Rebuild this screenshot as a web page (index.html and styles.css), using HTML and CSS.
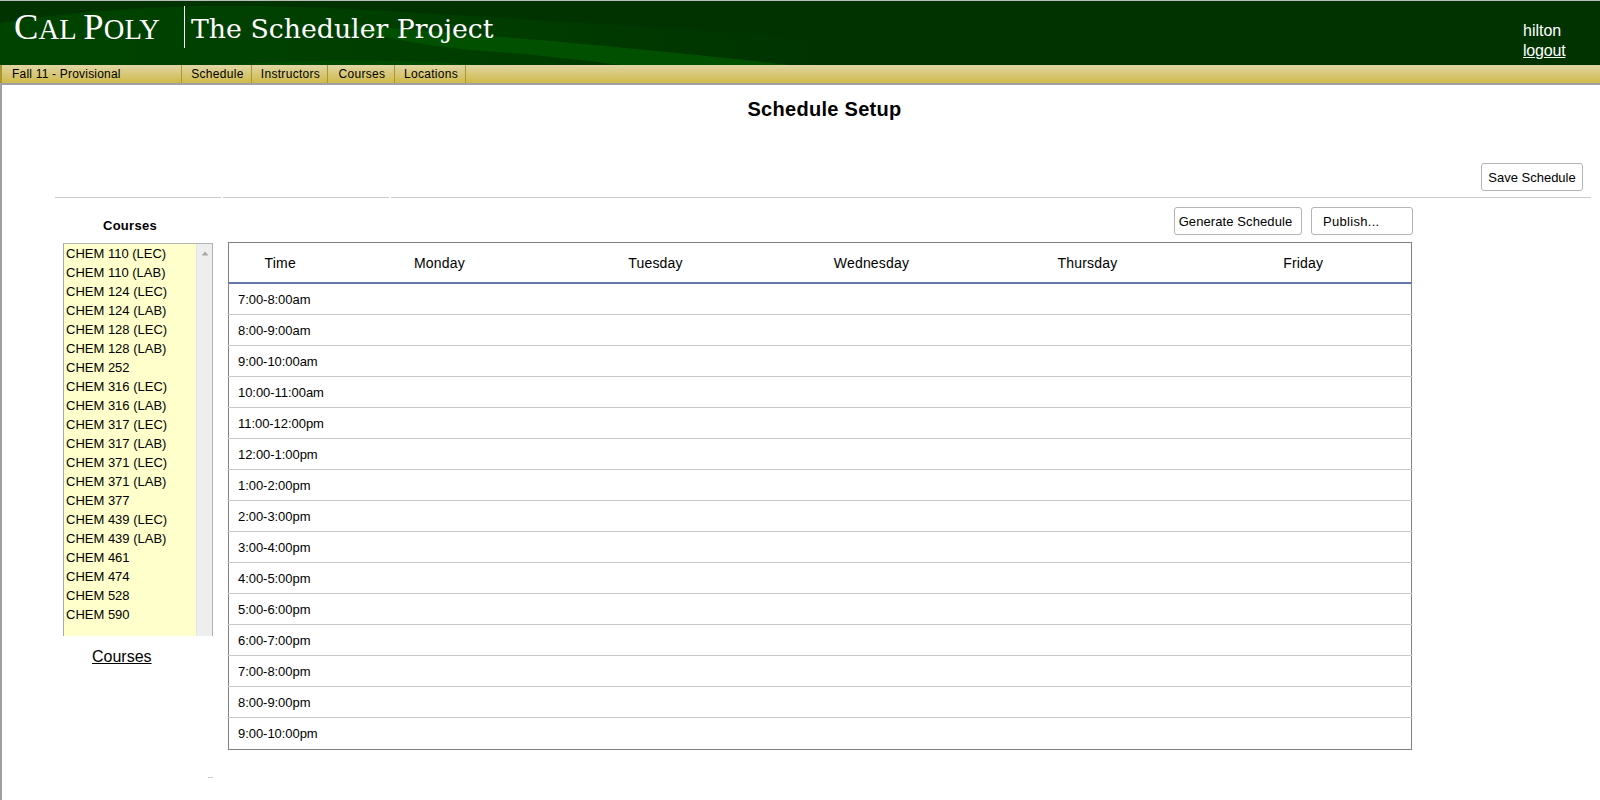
FILE: index.html
```html
<!DOCTYPE html>
<html lang="en">
<head>
<meta charset="utf-8">
<title>The Scheduler Project</title>
<link rel="stylesheet" href="styles.css">
</head>
<body>
<div class="page">
  <header class="masthead">
    <svg class="swoosh" width="1000" height="64" viewBox="0 0 1000 64" aria-hidden="true">
      <defs>
        <linearGradient id="fade" x1="0" y1="0" x2="1" y2="0">
          <stop offset="0" stop-color="#004300"/>
          <stop offset="0.55" stop-color="#003d00"/>
          <stop offset="0.95" stop-color="#003300"/>
        </linearGradient>
      </defs>
      <path d="M0 22C60 12 130 7 200 5C300 3 420 12 520 18C640 26 720 30 830 40L860 64H0Z" fill="url(#fade)"/>
      <path d="M330 22C400 28 480 34 540 39C620 46 710 55 790 64H620C575 58 530 53 470 49C420 44 380 36 330 22Z" fill="#005000"/>
      <path d="M230 64C300 58 400 58 480 64Z" fill="#004a00"/>
    </svg>
    <div class="brand">
      <span class="logo"><span class="logo-cap">C</span>AL <span class="logo-cap">P</span>OLY</span>
      <span class="project">The Scheduler Project</span>
    </div>
    <div class="user">
      <div>hilton</div>
      <a href="#">logout</a>
    </div>
  </header>
  <nav class="nav">
    <span class="nav-term">Fall 11 - Provisional</span>
    <a class="nav-item w-schedule" href="#">Schedule</a>
    <a class="nav-item w-instructors" href="#">Instructors</a>
    <a class="nav-item w-courses" href="#">Courses</a>
    <a class="nav-item w-locations" href="#">Locations</a>
  </nav>
  <main class="main">
    <h1 class="title">Schedule Setup</h1>
    <div class="save-row"><button class="btn btn-save">Save Schedule</button></div>
    <div class="rules"><span class="rule r1"></span><span class="rule r2"></span><span class="rule r3"></span></div>
    <div class="content">
      <aside class="side">
        <h2 class="side-title">Courses</h2>
        <div class="listbox">
          <ul class="course-list">
            <li>CHEM 110 (LEC)</li>
            <li>CHEM 110 (LAB)</li>
            <li>CHEM 124 (LEC)</li>
            <li>CHEM 124 (LAB)</li>
            <li>CHEM 128 (LEC)</li>
            <li>CHEM 128 (LAB)</li>
            <li>CHEM 252</li>
            <li>CHEM 316 (LEC)</li>
            <li>CHEM 316 (LAB)</li>
            <li>CHEM 317 (LEC)</li>
            <li>CHEM 317 (LAB)</li>
            <li>CHEM 371 (LEC)</li>
            <li>CHEM 371 (LAB)</li>
            <li>CHEM 377</li>
            <li>CHEM 439 (LEC)</li>
            <li>CHEM 439 (LAB)</li>
            <li>CHEM 461</li>
            <li>CHEM 474</li>
            <li>CHEM 528</li>
            <li>CHEM 590</li>
          </ul>
          <div class="scrollbar"><svg width="8" height="5" viewBox="0 0 8 5" aria-hidden="true"><path d="M4 0.5L7.5 4.5H0.5Z" fill="#a8a8a8"/></svg></div>
        </div>
        <a class="side-link" href="#">Courses</a>
        <div class="speck"></div>
      </aside>
      <section class="schedule">
        <div class="actions">
          <button class="btn btn-generate">Generate Schedule</button>
          <button class="btn btn-publish">Publish...</button>
        </div>
        <table class="grid">
          <thead>
            <tr><th class="col-time">Time</th><th>Monday</th><th>Tuesday</th><th>Wednesday</th><th>Thursday</th><th>Friday</th></tr>
          </thead>
          <tbody>
            <tr><td>7:00-8:00am</td><td></td><td></td><td></td><td></td><td></td></tr>
            <tr><td>8:00-9:00am</td><td></td><td></td><td></td><td></td><td></td></tr>
            <tr><td>9:00-10:00am</td><td></td><td></td><td></td><td></td><td></td></tr>
            <tr><td>10:00-11:00am</td><td></td><td></td><td></td><td></td><td></td></tr>
            <tr><td>11:00-12:00pm</td><td></td><td></td><td></td><td></td><td></td></tr>
            <tr><td>12:00-1:00pm</td><td></td><td></td><td></td><td></td><td></td></tr>
            <tr><td>1:00-2:00pm</td><td></td><td></td><td></td><td></td><td></td></tr>
            <tr><td>2:00-3:00pm</td><td></td><td></td><td></td><td></td><td></td></tr>
            <tr><td>3:00-4:00pm</td><td></td><td></td><td></td><td></td><td></td></tr>
            <tr><td>4:00-5:00pm</td><td></td><td></td><td></td><td></td><td></td></tr>
            <tr><td>5:00-6:00pm</td><td></td><td></td><td></td><td></td><td></td></tr>
            <tr><td>6:00-7:00pm</td><td></td><td></td><td></td><td></td><td></td></tr>
            <tr><td>7:00-8:00pm</td><td></td><td></td><td></td><td></td><td></td></tr>
            <tr><td>8:00-9:00pm</td><td></td><td></td><td></td><td></td><td></td></tr>
            <tr class="last-row"><td>9:00-10:00pm</td><td></td><td></td><td></td><td></td><td></td></tr>
          </tbody>
        </table>
      </section>
    </div>
  </main>
</div>
</body>
</html>
```
FILE: styles.css
```css
* { box-sizing: border-box; }
html, body { margin: 0; padding: 0; background: #fff; }
body {
  font-family: "Liberation Sans", Arial, sans-serif;
  color: #000;
  height: 800px;
  overflow: hidden;
}
.page {
  height: 800px;
  border-top: 1px solid #bcbcbc;
}
.masthead {
  position: relative;
  height: 64px;
  background: #003300;
  display: flex;
  justify-content: space-between;
  overflow: hidden;
}
.swoosh { position: absolute; left: 0; top: 0; }
.brand {
  position: relative;
  display: flex;
  align-items: flex-start;
  padding: 5px 0 0 14px;
}
.logo {
  width: 169px;
  height: 42px;
  margin-right: 1px;
  font-family: "Liberation Serif", serif;
  font-size: 28.5px;
  line-height: 41px;
  letter-spacing: 0.2px;
  color: #fff;
  white-space: nowrap;
}
.logo-cap { font-size: 36.5px; }
.project {
  height: 42px;
  border-left: 1px solid #fff;
  padding-left: 6px;
  font-family: "DejaVu Serif", serif;
  font-size: 26.75px;
  line-height: 45px;
  color: #fff;
  white-space: nowrap;
}
.user {
  position: relative;
  width: 77px;
  padding-top: 20px;
  font-size: 16px;
  line-height: 20px;
  color: #fff;
}
.user a { color: #fff; letter-spacing: -0.2px; }
.nav {
  height: 20px;
  display: flex;
  background: linear-gradient(#e0d6a4, #d0ba4c);
  border-bottom: 2px solid #a0a0a0;
  font-size: 12px;
  line-height: 19px;
}
.nav-term {
  width: 182px;
  padding-left: 10px;
  border-left: 2px solid #a8982e;
  border-right: 1px solid #a8982e;
  letter-spacing: 0.2px;
}
.nav-item {
  color: #000;
  text-decoration: none;
  text-align: center;
  padding-left: 2px;
  letter-spacing: 0.3px;
  border-right: 1px solid #a8982e;
}
.w-schedule { width: 70px; }
.w-instructors { width: 76px; }
.w-courses { width: 67px; }
.w-locations { width: 71px; }
.main {
  height: 715px;
  border-left: 2px solid #a0a0a0;
}
.title {
  margin: 0;
  padding: 13px 0 0 47px;
  height: 78px;
  text-align: center;
  font-size: 20px;
  line-height: 23px;
  font-weight: bold;
  letter-spacing: 0.3px;
}
.save-row {
  display: flex;
  justify-content: flex-end;
  padding-right: 17px;
}
.btn {
  height: 28px;
  padding: 0;
  background: #fff;
  border: 1px solid #b4b4b4;
  border-radius: 3px;
  font-family: "Liberation Sans", Arial, sans-serif;
  font-size: 13px;
  color: #000;
}
.btn-save { width: 102px; }
.btn-generate { width: 128px; padding-right: 5px; letter-spacing: 0.1px; }
.btn-publish { width: 102px; text-align: left; padding-left: 11px; letter-spacing: 0.3px; }
.rules {
  display: flex;
  gap: 2px;
  margin-top: 6px;
  padding-left: 53px;
}
.rule { height: 1px; background: #cccccc; }
.r1, .r2 { width: 166px; }
.r3 { width: 1200px; }
.content {
  display: flex;
  padding-left: 61px;
}
.side { width: 165px; }
.side-title {
  margin: 20px 0 0;
  height: 25px;
  width: 134px;
  text-align: center;
  font-size: 13px;
  line-height: 16px;
  font-weight: bold;
  letter-spacing: 0.3px;
}
.listbox {
  width: 150px;
  height: 393px;
  display: flex;
  border-top: 1px solid #b4b4b4;
  border-left: 1px solid #a8a8b4;
  border-right: 1px solid #b0b0b8;
  background: #ffffcc;
}
.course-list {
  list-style: none;
  flex: 1;
  margin: 0;
  padding: 0 0 0 2px;
  font-size: 13px;
  line-height: 19px;
  color: #000;
}
.scrollbar {
  width: 16px;
  background: #eeeeee;
  border-left: 1px solid #e4e4e4;
  display: flex;
  justify-content: center;
  align-items: flex-start;
  padding-top: 7px;
}
.side-link {
  display: block;
  margin-top: 11px;
  width: 150px;
  padding-left: 29px;
  font-size: 16px;
  line-height: 19px;
  color: #000;
}
.speck {
  margin: 111px 0 0 145px;
  width: 5px;
  height: 1px;
  background: #cccccc;
}
.schedule { width: 1186px; }
.actions {
  display: flex;
  gap: 9px;
  padding: 9px 0 0 946px;
}
.grid {
  margin-top: 7px;
  width: 1184px;
  table-layout: fixed;
  border-collapse: collapse;
  border: 1px solid #808080;
  font-size: 13px;
}
.grid th {
  height: 40px;
  width: 216px;
  padding: 2px 0 0;
  font-size: 14px;
  letter-spacing: 0.2px;
  font-weight: normal;
  text-align: center;
  border-bottom: 2px solid #6677aa;
}
.grid th.col-time { width: 103px; }
.grid td {
  height: 31px;
  padding: 0 0 0 9px;
  letter-spacing: -0.05px;
  border-top: 1px solid #c8c8c8;
}
.grid tbody tr:first-child td { height: 32px; padding-top: 1px; border-top: 0; }
.grid .last-row td { height: 32px; }
```
